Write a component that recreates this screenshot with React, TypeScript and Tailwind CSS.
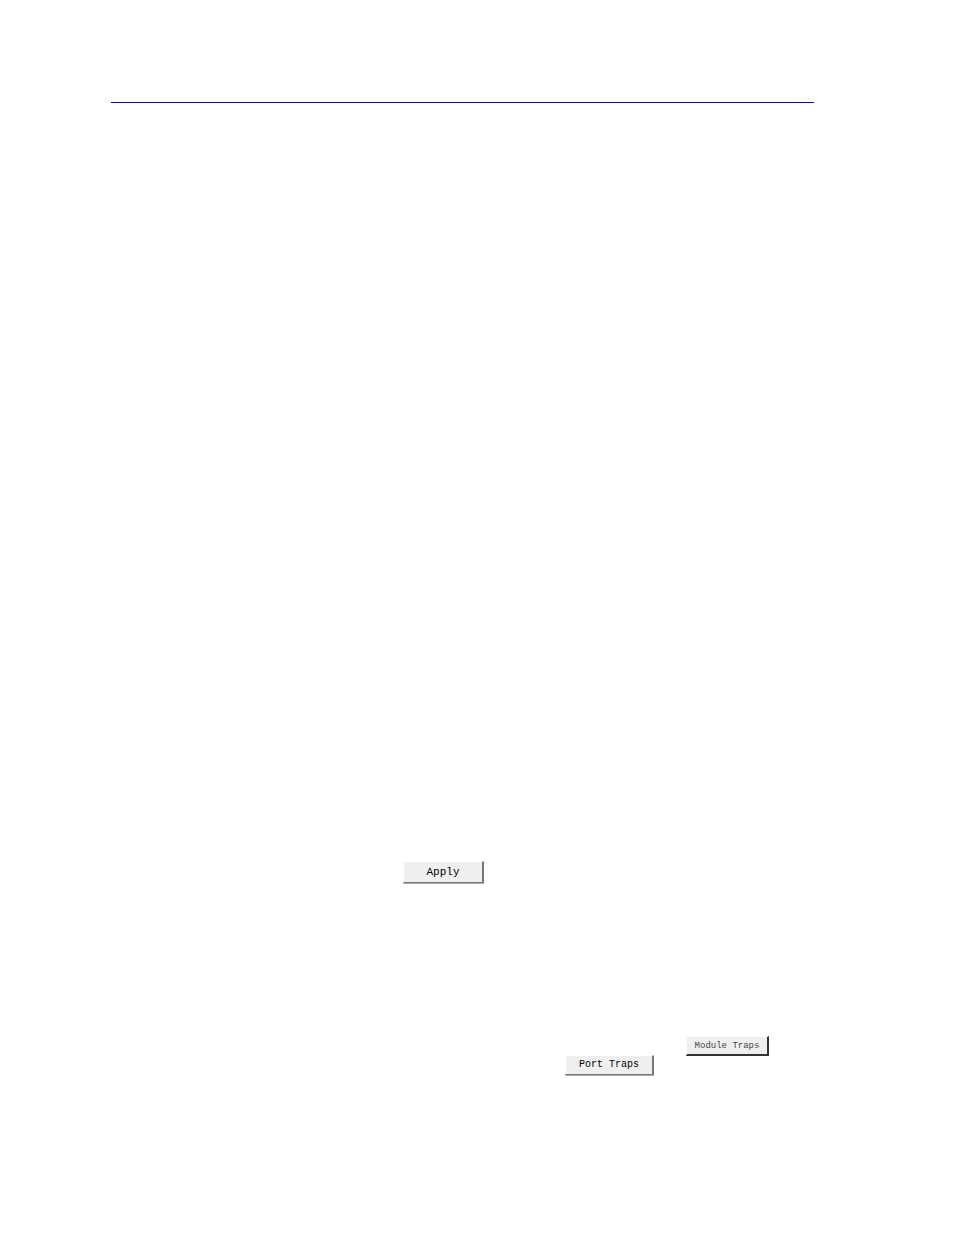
import React from 'react';
import clsx from 'clsx';

interface PanelButtonProps {
  label: string;
  className?: string;
}

const PanelButton: React.FC<PanelButtonProps> = ({ label, className }) => (
  <button
    type="button"
    className={clsx(
      'flex items-center justify-center whitespace-nowrap border-t border-l border-t-white border-l-white border-r-2 bg-[#efefef] font-["Liberation_Mono",monospace] leading-3',
      className
    )}
  >
    {label}
  </button>
);

export default function App() {
  return (
    <div className="min-h-screen bg-white pt-[102px] pr-[140px] pb-40 pl-[111px]">
      <header>
        <hr className="border-t border-[#0000cd]" />
      </header>

      <main className="pt-[758px]">
        <div className="pl-[292px]">
          <PanelButton
            label="Apply"
            className="h-[22px] w-[81px] border-b border-r-[#777777] border-b-[#777777] text-[11px] text-black shadow-[0_1px_0_#aaaaaa]"
          />
        </div>

        <div className="flex flex-col items-end pt-[153px]">
          <div className="pr-[45px]">
            <PanelButton
              label="Module Traps"
              className="h-5 w-[83px] border-b-2 border-r-[#333333] border-b-[#333333] text-[9px] text-[#444444]"
            />
          </div>
          <div className="-mt-px pr-40">
            <PanelButton
              label="Port Traps"
              className="h-5 w-[89px] border-b border-r-[#777777] border-b-[#777777] text-[10px] text-black shadow-[0_1px_0_#aaaaaa]"
            />
          </div>
        </div>
      </main>
    </div>
  );
}
